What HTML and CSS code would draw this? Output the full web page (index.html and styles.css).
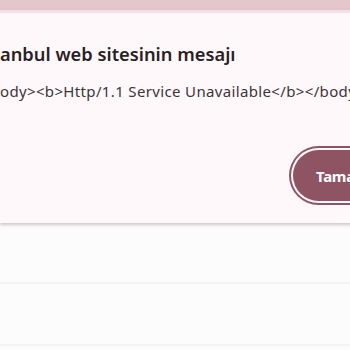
FILE: index.html
```html
<!DOCTYPE html>
<html lang="tr">
<head>
<meta charset="utf-8">
<link rel="stylesheet" href="styles.css">
</head>
<body>
<div class="topbar"></div>
<div class="dialog">
  <h1 class="title">anbul web sitesinin mesajı</h1>
  <p class="message">ody&gt;&lt;b&gt;Http/1.1 Service Unavailable&lt;/b&gt;&lt;/body&gt;</p>
  <div class="actions">
    <button class="btn">Tamam</button>
  </div>
</div>
<div class="rows">
  <div class="row"></div>
  <div class="row"></div>
</div>
</body>
</html>
```
FILE: styles.css
```css
html, body {
  margin: 0;
  padding: 0;
  overflow: hidden;
  background: #fdfcfd;
  width: 350px;
  height: 350px;
}
.topbar {
  height: 10px;
  background: #e3c7cd;
}
.dialog {
  width: 420px;
  background: #fff8fb;
  border-top: 3px solid #f7dee3;
  padding: 0;
  height: 213px;
  box-sizing: border-box;
  box-shadow: 0 2px 3px rgba(120, 100, 108, 0.35);
  font-family: "Noto Sans", "Open Sans", sans-serif;
  position: relative;
  z-index: 1;
}
.title {
  margin: 0;
  padding-top: 28px;
  font-size: 18.3px;
  line-height: 26px;
  font-weight: 600;
  color: #2a1f26;
  white-space: nowrap;
}
.message {
  margin: 14px 0 0;
  font-size: 15px;
  line-height: 20px;
  letter-spacing: 0.35px;
  color: #3b3539;
  white-space: nowrap;
}
.actions {
  display: flex;
  padding-top: 49px;
  padding-left: 293px;
}
.btn {
  height: 51px;
  padding: 0 24px 0 23px;
  border: none;
  border-radius: 26px;
  background: #8f5464;
  color: #ffffff;
  font-family: "Noto Sans", "Open Sans", sans-serif;
  font-weight: 700;
  font-size: 15px;
  letter-spacing: -0.3px;
  box-shadow: 0 0 0 2px #fff8fb, 0 0 0 4px #8f5464;
}
.rows {
  padding-top: 59px;
}
.row {
  height: 60px;
  border-top: 2px solid #f6f3f4;
}
```
